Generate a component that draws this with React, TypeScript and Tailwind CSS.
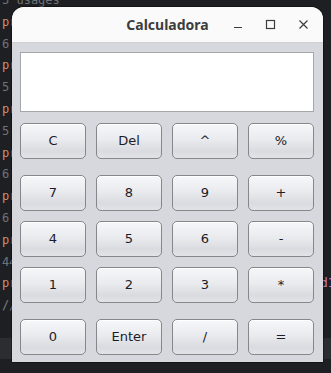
import React from 'react';

const codeLines: { text: string; color: string }[] = [
  { text: '3 usages', color: 'text-[#6f737a]' },
  { text: 'private', color: 'text-[#cf8e6d]' },
  { text: '6 usages', color: 'text-[#6f737a]' },
  { text: 'private', color: 'text-[#cf8e6d]' },
  { text: '5 usages', color: 'text-[#6f737a]' },
  { text: 'private', color: 'text-[#cf8e6d]' },
  { text: '5 usages', color: 'text-[#6f737a]' },
  { text: 'private', color: 'text-[#cf8e6d]' },
  { text: '6 usages', color: 'text-[#6f737a]' },
  { text: 'private', color: 'text-[#cf8e6d]' },
  { text: '6 usages', color: 'text-[#6f737a]' },
  { text: 'private', color: 'text-[#cf8e6d]' },
  { text: '44 usages', color: 'text-[#6f737a]' },
  { text: 'private', color: 'text-[#cf8e6d]' },
  { text: '// ', color: 'text-[#7a7e85]' },
];

// rows of keys, with the top margin each row has in the window
const rows: { keys: string[]; mt: string }[] = [
  { keys: ['C', 'Del', '^', '%'], mt: 'mt-[11px]' },
  { keys: ['7', '8', '9', '+'], mt: 'mt-[16px]' },
  { keys: ['4', '5', '6', '-'], mt: 'mt-[10px]' },
  { keys: ['1', '2', '3', '*'], mt: 'mt-[10px]' },
  { keys: ['0', 'Enter', '/', '='], mt: 'mt-[16px]' },
];

function Key({ label }: { label: string }) {
  return (
    <button className="h-[36px] w-[66px] rounded-[5px] border border-[#85878b] bg-[linear-gradient(to_bottom,#f6f7f9_0%,#eaebee_45%,#d9dbe0_80%,#e1e3e7_100%)] text-[13px] text-[#1c1c28] shadow-[inset_0_1px_0_#ffffff] [font-family:'DejaVu_Sans',sans-serif]">
      {label}
    </button>
  );
}

export default function App() {
  return (
    <div className="relative h-[373px] w-[331px] overflow-hidden bg-[#1e1f22]">
      {/* editor behind the window */}
      <div className="mt-[-10px] pl-[2px] text-[12px] leading-[21.8px] [font-family:'DejaVu_Sans_Mono',monospace]">
        {codeLines.map((l, i) => (
          <div key={i} className={l.color}>
            {l.text}
          </div>
        ))}
      </div>
      <div className="absolute left-0 top-[338px] h-[21px] w-[331px] bg-[#2b2d30]" />
      <div className="absolute right-[-4px] top-[274px] text-[12px] text-[#c77dbb] [font-family:'DejaVu_Sans_Mono',monospace]">
        d1
      </div>

      {/* calculator window */}
      <div className="absolute left-[12px] top-[7px] flex w-[311px] flex-col overflow-hidden rounded-t-[12px] bg-[#d6d8dd] shadow-[0_0_0_1px_rgba(0,0,0,0.35)]">
        <div className="relative flex h-[36px] items-center justify-center border-b border-[#d0d0d0] bg-[#fafafa]">
          <span className="text-[14px] font-bold text-[#3d3d3d] [font-family:'Noto_Sans',sans-serif]">
            Calculadora
          </span>
          <div className="absolute right-[9px] top-0 flex h-[36px] items-center gap-[13px] text-[#3d3d3d]">
            <svg width="20" height="20" viewBox="0 0 20 20">
              <path d="M6 12.5h8" stroke="currentColor" strokeWidth="1.2" />
            </svg>
            <svg width="20" height="20" viewBox="0 0 20 20">
              <rect x="5.5" y="5.5" width="8" height="8" fill="none" stroke="currentColor" strokeWidth="1.2" />
            </svg>
            <svg width="20" height="20" viewBox="0 0 20 20">
              <path d="M5.5 5.5l8 8M13.5 5.5l-8 8" stroke="currentColor" strokeWidth="1.2" />
            </svg>
          </div>
        </div>

        <div className="flex flex-col pb-[7px] pl-[8px] pt-[9px]">
          <div className="h-[60px] w-[294px] border border-[#a5a7ab] bg-white" />
          {rows.map((r, i) => (
            <div key={i} className={`flex gap-[10px] ${r.mt}`}>
              {r.keys.map((k) => (
                <Key key={k} label={k} />
              ))}
            </div>
          ))}
        </div>
      </div>
    </div>
  );
}
